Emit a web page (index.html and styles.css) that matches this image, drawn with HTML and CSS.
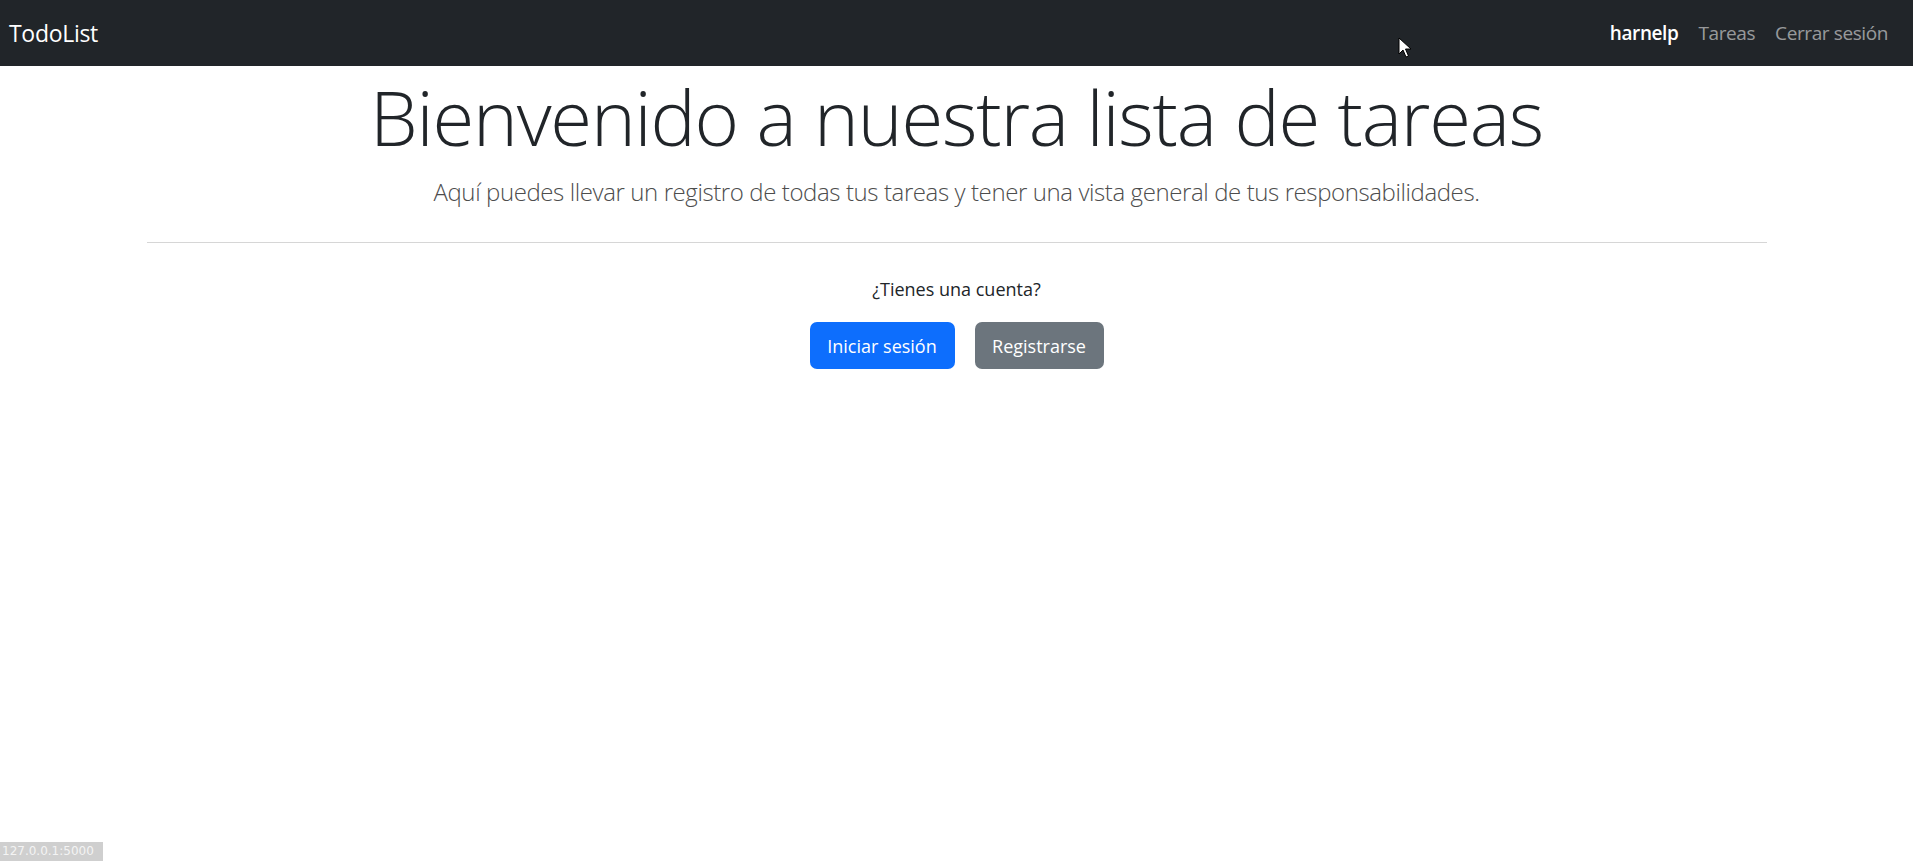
FILE: index.html
```html
<!DOCTYPE html>
<html lang="es">
<head>
<meta charset="utf-8">
<title>TodoList</title>
<link rel="stylesheet" href="styles.css">
</head>
<body>
<nav class="navbar">
  <a class="brand" href="#">TodoList</a>
  <ul class="nav">
    <li><a class="nav-link active" href="#">harnelp</a></li>
    <li><a class="nav-link" href="#">Tareas</a></li>
    <li><a class="nav-link" href="#">Cerrar sesión</a></li>
  </ul>
</nav>
<main class="container">
  <section class="hero">
    <h1 class="title">Bienvenido a nuestra lista de tareas</h1>
    <p class="lead">Aquí puedes llevar un registro de todas tus tareas y tener una vista general de tus responsabilidades.</p>
    <hr class="divider">
    <p class="question">¿Tienes una cuenta?</p>
    <div class="actions">
      <a class="btn btn-primary" href="#">Iniciar sesión</a>
      <a class="btn btn-secondary" href="#">Registrarse</a>
    </div>
  </section>
</main>
<div class="status">127.0.0.1:5000</div>
<svg class="cursor" width="14" height="22" viewBox="0 0 14 22"><path d="M1 1 L1 17 L5 13 L8 20 L10.5 19 L7.5 12 L13 12 Z" fill="#fff" stroke="#000" stroke-width="1"/></svg>
</body>
</html>
```
FILE: styles.css
```css
html, body {
  margin: 0;
  padding: 0;
  background: #fff;
  font-family: "Open Sans", "Noto Sans", sans-serif;
  color: #212529;
}
.navbar {
  height: 66px;
  background: #212529;
  display: flex;
  align-items: center;
  justify-content: space-between;
  padding: 0 25px 0 9px;
  box-sizing: border-box;
}
.brand {
  color: #fff;
  font-size: 23px;
  text-decoration: none;
  letter-spacing: -0.3px;
}
.nav {
  list-style: none;
  display: flex;
  margin: 0;
  padding: 0;
  gap: 20px;
}
.nav-link {
  color: rgba(255,255,255,0.55);
  font-size: 19px;
  text-decoration: none;
  letter-spacing: -0.4px;
}
.nav-link.active {
  color: #fff;
  font-weight: 600;
}
.container {
  width: 1620px;
  margin: 0 auto;
}
.hero {
  text-align: center;
}
.title {
  font-weight: 300;
  font-size: 76px;
  line-height: 1.2;
  margin: 0;
  padding-top: 5px;
  letter-spacing: -1.2px;
}
.lead {
  font-size: 24px;
  font-weight: 300;
  color: #4d4d4d;
  margin: 13px 0 0;
  letter-spacing: -0.4px;
}
.divider {
  border: 0;
  border-top: 1px solid #d6d6d6;
  margin: 34px 0 0;
}
.question {
  font-size: 18px;
  margin: 34px 0 0;
}
.actions {
  display: flex;
  justify-content: center;
  gap: 20px;
  margin-top: 21px;
}
.btn {
  display: inline-flex;
  align-items: center;
  justify-content: center;
  height: 47px;
  padding: 0 15px;
  border-radius: 7px;
  color: #fff;
  font-size: 18px;
  text-decoration: none;
  box-sizing: border-box;
}
.btn-primary { background: #0d6efd; width: 145px; }
.btn-secondary { background: #6c757d; width: 129px; }
.status {
  position: absolute;
  left: 0;
  bottom: 0;
  width: 103px;
  height: 19px;
  background: #cfcfcf;
  color: #f4f4f4;
  font-size: 12px;
  line-height: 19px;
  padding-left: 2px;
  box-sizing: border-box;
  font-family: "DejaVu Sans", sans-serif;
  overflow: hidden;
  white-space: nowrap;
}
.cursor {
  position: absolute;
  left: 1398px;
  top: 37px;
}
```
